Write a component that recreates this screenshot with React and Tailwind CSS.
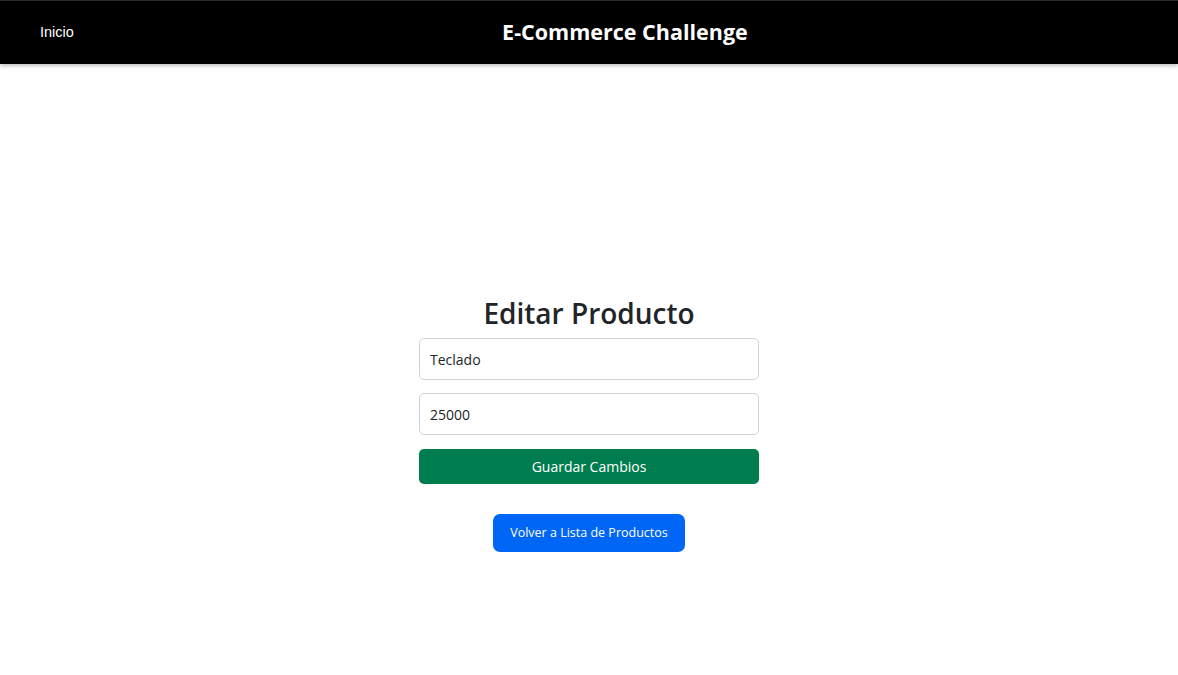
import React, { useState } from 'react';

const App = () => {
  const [name, setName] = useState('Teclado');
  const [price, setPrice] = useState('25000');

  return (
    <div className="min-h-screen bg-white" style={{ fontFamily: '"Open Sans", sans-serif' }}>
      <header className="h-16 bg-black border-t border-[#2a2a2a] shadow-[0_2px_4px_rgba(0,0,0,0.25)] flex items-center pl-10 pr-[2px] relative">
        <a href="#" className="text-white text-[14.5px] font-['Liberation_Sans',sans-serif]">Inicio</a>
        <h1 className="flex-1 text-center text-white text-[21.5px] font-bold">E-Commerce Challenge</h1>
      </header>

      <main className="flex flex-col items-center pt-[232px]">
        <h2 className="text-[28px] font-semibold text-[#212529] leading-[34px] mb-2">Editar Producto</h2>
        <form className="w-[340px] flex flex-col" onSubmit={(e) => e.preventDefault()}>
          <input
            value={name}
            onChange={(e) => setName(e.target.value)}
            className="h-[42px] border border-[#ced4da] rounded-[5px] px-[10px] text-[14px] text-[#212529] mb-[13px] outline-none"
          />
          <input
            value={price}
            onChange={(e) => setPrice(e.target.value)}
            className="h-[42px] border border-[#ced4da] rounded-[5px] px-[10px] text-[14px] text-[#212529] mb-[14px] outline-none"
          />
          <button type="submit" className="h-[35px] bg-[#007d4e] text-white text-[14px] rounded-[5px]">
            Guardar Cambios
          </button>
        </form>
        <button className="mt-[30px] w-[192px] h-[38px] bg-[#0066f5] text-white text-[12.5px] rounded-[7px]">
          Volver a Lista de Productos
        </button>
      </main>
    </div>
  );
};

export default App;
